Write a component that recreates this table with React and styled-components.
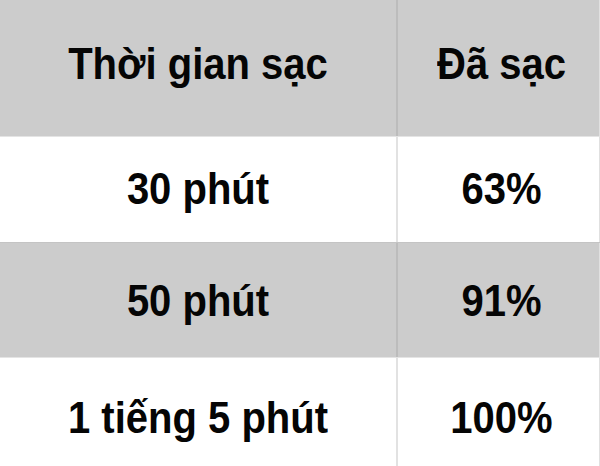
import styled, { createGlobalStyle } from 'styled-components';

const GlobalStyle = createGlobalStyle`
  html, body {
    margin: 0;
    padding: 0;
    background: #ffffff;
  }
  body {
    font-family: "Liberation Sans", Arial, sans-serif;
  }
`;

const rows = [
  { time: 'Thời gian sạc', charged: 'Đã sạc', grey: true, height: 137, shift: -9 },
  { time: '30 phút', charged: '63%', grey: false, height: 106, shift: -2 },
  { time: '50 phút', charged: '91%', grey: true, height: 115, shift: 2 },
  { time: '1 tiếng 5 phút', charged: '100%', grey: false, height: 108, shift: 12 },
];

const App = () => (
  <>
    <GlobalStyle />
    <Table>
      {rows.map((row) => (
        <Row key={row.time} $grey={row.grey} $height={row.height}>
          <Cell $grey={row.grey} $shift={row.shift} $divider>
            <Label>{row.time}</Label>
          </Cell>
          <Cell $grey={row.grey} $shift={row.shift} $offset={6}>
            <Label>{row.charged}</Label>
          </Cell>
        </Row>
      ))}
    </Table>
  </>
);

export default App;

const Table = styled.div`
  display: flex;
  flex-direction: column;
  width: 600px;
  height: 466px;
  overflow: hidden;
`;

const Row = styled.div`
  display: grid;
  grid-template-columns: 398px 1fr;
  height: ${(p) => p.$height}px;
  flex-shrink: 0;
  box-sizing: border-box;
  background: ${(p) => (p.$grey ? '#cccccc' : '#ffffff')};
  border-bottom: 1px solid ${(p) => (p.$grey ? '#e4e4e4' : '#c4c4c4')};

  &:last-child {
    border-bottom: none;
  }
`;

const Cell = styled.div`
  display: flex;
  align-items: center;
  justify-content: center;
  box-sizing: border-box;
  padding-left: ${(p) => p.$offset || 0}px;
  padding-top: ${(p) => Math.max(p.$shift, 0)}px;
  padding-bottom: ${(p) => Math.max(-p.$shift, 0)}px;
  border-right: ${(p) =>
    p.$divider ? `2px solid ${p.$grey ? '#bcbcbc' : '#e2e2e2'}` : '1px solid #e0e0e0'};
`;

const Label = styled.span`
  display: inline-block;
  font-size: 40px;
  font-weight: 700;
  line-height: 1;
  color: #050505;
  white-space: nowrap;
  transform: scaleY(1.1);
`;
